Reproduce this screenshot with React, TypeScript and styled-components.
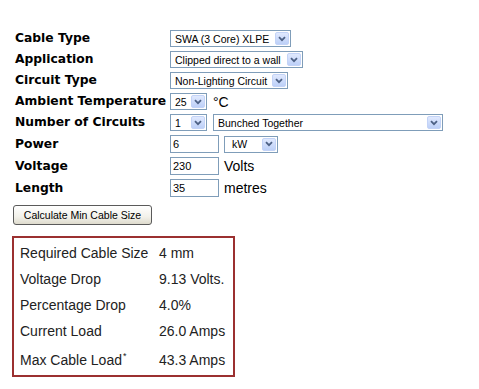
import React from 'react';
import styled, { createGlobalStyle } from 'styled-components';

const GlobalStyle = createGlobalStyle`
  body {
    margin: 0;
    background: #fff;
    color: #000;
  }
`;

interface ResultRow {
  label: string;
  value: string;
  note?: boolean;
}

const results: ResultRow[] = [
  { label: 'Required Cable Size', value: '4 mm' },
  { label: 'Voltage Drop', value: '9.13 Volts.' },
  { label: 'Percentage Drop', value: '4.0%' },
  { label: 'Current Load', value: '26.0 Amps' },
  { label: 'Max Cable Load', value: '43.3 Amps', note: true },
];

const Combo: React.FC<{ width: number; value: string }> = ({ width, value }) => (
  <ComboBox $width={width}>
    <ComboText>{value}</ComboText>
    <ComboArrow>
      <svg width="8" height="6" viewBox="0 0 8 6">
        <path d="M1 1.2 L4 4.2 L7 1.2" fill="none" stroke="#4d6185" strokeWidth="1.8" />
      </svg>
    </ComboArrow>
  </ComboBox>
);

const App: React.FC = () => {
  return (
    <Page>
      <GlobalStyle />
      <Form>
        <Label>Cable Type</Label>
        <Controls>
          <Combo width={121} value="SWA (3 Core) XLPE" />
        </Controls>
        <Label>Application</Label>
        <Controls>
          <Combo width={133} value="Clipped direct to a wall" />
        </Controls>
        <Label>Circuit Type</Label>
        <Controls>
          <Combo width={118} value="Non-Lighting Circuit" />
        </Controls>
        <Label>Ambient Temperature</Label>
        <Controls>
          <Combo width={37} value="25" />
          <Unit>°C</Unit>
        </Controls>
        <Label>Number of Circuits</Label>
        <Controls>
          <Combo width={37} value="1" />
          <Combo width={230} value="Bunched Together" />
        </Controls>
        <Label>Power</Label>
        <Controls $gap={5}>
          <Field defaultValue="6" />
          <Combo width={54} value=" kW" />
        </Controls>
        <Label>Voltage</Label>
        <Controls $gap={5}>
          <Field defaultValue="230" />
          <Unit>Volts</Unit>
        </Controls>
        <Label>Length</Label>
        <Controls $gap={5}>
          <Field defaultValue="35" />
          <Unit>metres</Unit>
        </Controls>
      </Form>
      <Button>Calculate Min Cable Size</Button>
      <ResultBox>
        {results.map((row) => (
          <React.Fragment key={row.label}>
            <ResultCell $tall={row.note}>
              {row.label}
              {row.note && <Note>*</Note>}
            </ResultCell>
            <ResultCell $tall={row.note}>{row.value}</ResultCell>
          </React.Fragment>
        ))}
      </ResultBox>
    </Page>
  );
};

export default App;

const Page = styled.div`
  padding: 30px 0 0 12px;
  display: flex;
  flex-direction: column;
  align-items: flex-start;
`;

const Form = styled.div`
  display: grid;
  grid-template-columns: 155px auto;
  row-gap: 4px;
  align-items: center;
  margin-left: 3px;
`;

const Label = styled.div`
  font-family: 'DejaVu Sans', Verdana, sans-serif;
  font-weight: bold;
  font-size: 12.3px;
  line-height: 15px;
  white-space: nowrap;
`;

const Controls = styled.div<{ $gap?: number }>`
  display: flex;
  align-items: center;
  gap: ${(p) => p.$gap ?? 6}px;
`;

const ComboBox = styled.div<{ $width: number }>`
  box-sizing: border-box;
  width: ${(p) => p.$width}px;
  height: 17px;
  border: 1px solid #7f9db9;
  background: #fff;
  display: flex;
  align-items: center;
  padding: 0 1px 0 4px;
`;

const ComboText = styled.span`
  flex: 1;
  font-family: 'Liberation Sans', Arial, sans-serif;
  font-size: 10.5px;
  white-space: pre;
  overflow: hidden;
`;

const ComboArrow = styled.span`
  box-sizing: border-box;
  width: 14px;
  height: 13px;
  margin-left: 3px;
  border: 1px solid #c3d3f7;
  border-radius: 2px;
  background: linear-gradient(#e0e9fe, #bdd0f8);
  display: flex;
  align-items: center;
  justify-content: center;
`;

const Field = styled.input`
  box-sizing: border-box;
  width: 49px;
  height: 18px;
  border: 1px solid #7f9db9;
  padding: 0 2px;
  font-family: 'Liberation Sans', Arial, sans-serif;
  font-size: 11px;
  color: #000;
  outline: none;
`;

const Unit = styled.span`
  font-family: 'Liberation Sans', Arial, sans-serif;
  font-size: 14px;
`;

const Button = styled.button`
  margin: 8px 0 0 1px;
  width: 139px;
  height: 20px;
  padding: 0;
  border: 1px solid #5a5a5a;
  border-radius: 3px;
  background: linear-gradient(#ffffff, #f2f1ea 60%, #dedbcd);
  font-family: 'Liberation Sans', Arial, sans-serif;
  font-size: 10.5px;
  color: #000;
`;

const ResultBox = styled.div`
  margin-top: 11px;
  box-sizing: border-box;
  width: 223px;
  border: 2px solid #9b3030;
  padding: 2px 0 2px 6px;
  display: grid;
  grid-template-columns: 139px auto;
  font-family: 'Liberation Sans', Arial, sans-serif;
  font-size: 14px;
  line-height: 16px;
  color: #222;
`;

const ResultCell = styled.div<{ $tall?: boolean }>`
  padding: ${(p) => (p.$tall ? '8px 0 5px' : '5px 0')};
  white-space: nowrap;
`;

const Note = styled.sup`
  font-size: 9px;
  line-height: 0;
  margin-left: 1px;
`;
